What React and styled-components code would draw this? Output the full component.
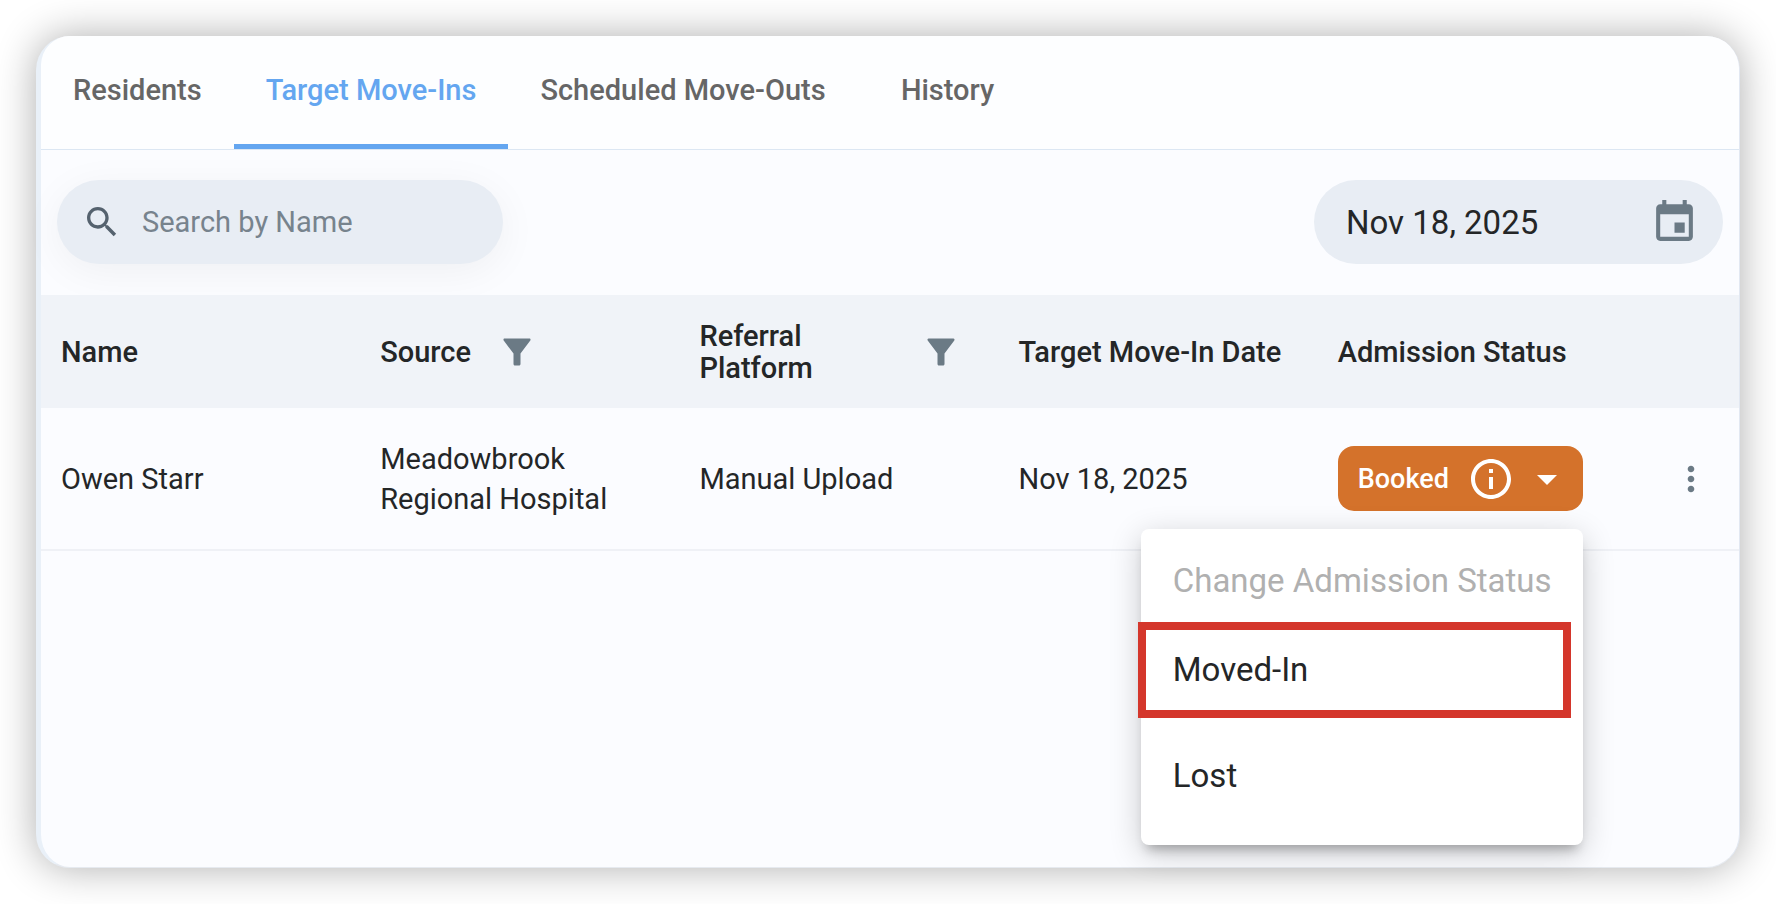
import React from "react";
import styled, { createGlobalStyle } from "styled-components";

const GlobalStyle = createGlobalStyle`
  *, *::before, *::after { box-sizing: border-box; }
  html, body { margin: 0; background: #fff; }
  body { font-family: Roboto, "Liberation Sans", sans-serif; color: #242627; font-size: 29px; }
  button, input { font: inherit; color: inherit; border: 0; background: none; padding: 0; margin: 0; }
  button { cursor: pointer; }
`;

const Page = styled.main`
  min-height: 100vh;
  padding: 36px;
  display: flex;
`;

const Card = styled.section`
  flex: 1;
  min-width: 0;
  display: flex;
  flex-direction: column;
  background: #fbfcff;
  border-left: 5px solid #e9f0f8;
  border-right: 1px solid #e2e8f2;
  border-bottom: 1px solid #e6eaf0;
  border-radius: 34px;
  box-shadow: 0 0 40px rgba(0, 0, 0, 0.32);
`;

const Tabs = styled.nav`
  display: flex;
  height: 114px;
  background: #fdfeff;
  border-bottom: 1px solid #dce7f3;
  border-radius: 29px 33px 0 0;
`;

const Tab = styled.button`
  min-width: 180px;
  height: 113px;
  padding: 0 32px;
  font-weight: 500;
  color: ${(p) => (p.$active ? "#64a6f0" : "#666")};
  border-bottom: 5px solid ${(p) => (p.$active ? "#64a6f0" : "transparent")};
`;

const Toolbar = styled.div`
  display: flex;
  justify-content: space-between;
  align-items: center;
  padding: 30px 16px 31px;
`;

const Pill = styled.label`
  display: flex;
  align-items: center;
  height: 84px;
  border-radius: 42px;
  background: #e8edf4;
`;

const SearchPill = styled(Pill)`
  width: 446px;
  padding: 0 25px;
  gap: 20px;
  color: #55626e;
  box-shadow: 0 8px 40px rgba(0, 0, 0, 0.05);
`;

const DatePill = styled(Pill)`
  width: 409px;
  padding: 0 24px 0 32px;
  justify-content: space-between;
  font-size: 33px;
`;

const TextInput = styled.input`
  flex: 1;
  min-width: 0;
  outline: 0;
  &::placeholder { color: #77838d; opacity: 1; }
`;

const IconButton = styled.button`
  display: flex;
  flex: none;
  color: #6b7a85;
`;

const Table = styled.table`
  width: 100%;
  table-layout: fixed;
  border-collapse: collapse;
  text-align: left;
`;

const MenuCol = styled.col`
  width: 102px;
`;

const HeadCell = styled.th`
  height: 113px;
  padding: 0 20px;
  background: #f0f3f8;
  font-weight: 500;
  line-height: 32px;
`;

const HeadContent = styled.div`
  display: flex;
  align-items: center;
  gap: 30px;
`;

const Cell = styled.td`
  height: 142px;
  padding: 0 20px;
  border-bottom: 2px solid #eff1f6;
  line-height: 40px;
`;

const ActionCell = styled(Cell)`
  padding: 0 34px;
`;

const FilterButton = styled(IconButton)`
  margin-right: 22px;
`;

const StatusAnchor = styled.div`
  position: relative;
  width: max-content;
`;

const StatusButton = styled.button`
  display: flex;
  align-items: center;
  gap: 8px;
  width: 245px;
  height: 65px;
  padding: 0 12px 0 20px;
  border-radius: 16px;
  background: #d4722b;
  color: #fff;
  font-size: 27px;
  font-weight: 500;
`;

const StatusLabel = styled.span`
  flex: 1;
  text-align: left;
`;

const Menu = styled.div`
  position: absolute;
  top: 83px;
  right: 0;
  z-index: 1;
  width: 442px;
  padding: 16px 0;
  display: flex;
  flex-direction: column;
  border-radius: 8px;
  background: #fff;
  box-shadow: 0 10px 12px -6px rgba(0, 0, 0, 0.28), 0 8px 32px rgba(0, 0, 0, 0.2);
  font-size: 33px;
`;

const MenuTitle = styled.p`
  margin: 0;
  padding: 0 32px;
  line-height: 72px;
  color: #b0b0b0;
  white-space: nowrap;
`;

const MenuItem = styled.button`
  height: 106px;
  padding: 0 32px;
  text-align: left;
`;

const Highlight = styled.span`
  position: absolute;
  top: 93px;
  left: -3px;
  right: 12px;
  height: 96px;
  border: 8px solid #d4362b;
  pointer-events: none;
`;

const SearchIcon = () => (
  <svg width="40" height="40" viewBox="0 0 24 24" fill="currentColor" aria-hidden="true">
    <path d="M15.5 14h-.79l-.28-.27C15.41 12.59 16 11.11 16 9.5 16 5.91 13.09 3 9.5 3S3 5.91 3 9.5 5.91 16 9.5 16c1.61 0 3.09-.59 4.23-1.57l.27.28v.79l5 4.99L20.49 19l-4.99-5zm-6 0C7.01 14 5 11.99 5 9.5S7.01 5 9.5 5 14 7.01 14 9.5 11.99 14 9.5 14z" />
  </svg>
);

const CalendarIcon = () => (
  <svg width="49" height="49" viewBox="0 0 24 24" fill="currentColor" aria-hidden="true">
    <path d="M17 12h-5v5h5v-5zM16 1v2H8V1H6v2H5c-1.11 0-1.99.9-1.99 2L3 19c0 1.1.89 2 2 2h14c1.1 0 2-.9 2-2V5c0-1.1-.9-2-2-2h-1V1h-2zm3 18H5V8h14v11z" />
  </svg>
);

const FilterIcon = () => (
  <svg width="32" height="32" viewBox="0 0 32 32" fill="currentColor" aria-hidden="true">
    <path d="M3.6 2.5h24.8c1 0 1.5 1.2.9 2L19.5 17.6V28c0 .9-.6 1.5-1.5 1.5h-4c-.9 0-1.5-.6-1.5-1.5V17.6L2.7 4.500c-.6-.8-.1-2 .9-2z" />
  </svg>
);

const InfoIcon = () => (
  <svg width="48" height="48" viewBox="0 0 24 24" fill="currentColor" aria-hidden="true">
    <path d="M11 7h2v2h-2zm0 4h2v6h-2zm1-9C6.48 2 2 6.48 2 12s4.480 10 10 10 10-4.480 10-10S17.520 2 12 2zm0 18c-4.410 0-8-3.590-8-8s3.590-8 8-8 8 3.590 8 8-3.590 8-8 8z" />
  </svg>
);

const CaretIcon = () => (
  <svg width="48" height="48" viewBox="0 0 24 24" fill="currentColor" aria-hidden="true">
    <path d="m7 10 5 5 5-5z" />
  </svg>
);

const MoreIcon = () => (
  <svg width="40" height="40" viewBox="0 0 24 24" fill="currentColor" aria-hidden="true">
    <path d="M12 8c1.1 0 2-.9 2-2s-.9-2-2-2-2 .9-2 2 .9 2 2 2zm0 2c-1.1 0-2 .9-2 2s.9 2 2 2 2-.9 2-2-.9-2-2-2zm0 6c-1.1 0-2 .9-2 2s.9 2 2 2 2-.9 2-2-.9-2-2-2z" />
  </svg>
);

const TABS = ["Residents", "Target Move-Ins", "Scheduled Move-Outs", "History"];

const COLUMNS = [
  { label: "Name" },
  { label: "Source", filter: true },
  { label: "Referral Platform", filter: true },
  { label: "Target Move-In Date" },
  { label: "Admission Status" },
];

function StatusSelect() {
  return (
    <StatusAnchor>
      <StatusButton aria-haspopup="menu" aria-expanded="true">
        <StatusLabel>Booked</StatusLabel>
        <InfoIcon />
        <CaretIcon />
      </StatusButton>
      <Menu role="menu">
        <MenuTitle>Change Admission Status</MenuTitle>
        <MenuItem role="menuitem">Moved-In</MenuItem>
        <MenuItem role="menuitem">Lost</MenuItem>
        <Highlight />
      </Menu>
    </StatusAnchor>
  );
}

export default function App() {
  return (
    <>
      <GlobalStyle />
      <Page>
        <Card>
          <Tabs>
            {TABS.map((tab, i) => (
              <Tab key={tab} $active={i === 1}>{tab}</Tab>
            ))}
          </Tabs>
          <Toolbar>
            <SearchPill>
              <SearchIcon />
              <TextInput type="search" placeholder="Search by Name" aria-label="Search by Name" />
            </SearchPill>
            <DatePill>
              <TextInput defaultValue="Nov 18, 2025" aria-label="Date" />
              <IconButton aria-label="Open calendar"><CalendarIcon /></IconButton>
            </DatePill>
          </Toolbar>
          <Table>
            <colgroup>
              {COLUMNS.map((c) => <col key={c.label} />)}
              <MenuCol />
            </colgroup>
            <thead>
              <tr>
                {COLUMNS.map((c) => (
                  <HeadCell key={c.label} scope="col">
                    <HeadContent>
                      <span>{c.label}</span>
                      {c.filter && (
                        <FilterButton aria-label={`Filter ${c.label}`}><FilterIcon /></FilterButton>
                      )}
                    </HeadContent>
                  </HeadCell>
                ))}
                <HeadCell />
              </tr>
            </thead>
            <tbody>
              <tr>
                <Cell>Owen Starr</Cell>
                <Cell>Meadowbrook Regional Hospital</Cell>
                <Cell>Manual Upload</Cell>
                <Cell>Nov 18, 2025</Cell>
                <Cell><StatusSelect /></Cell>
                <ActionCell><IconButton aria-label="More actions"><MoreIcon /></IconButton></ActionCell>
              </tr>
            </tbody>
          </Table>
        </Card>
      </Page>
    </>
  );
}
